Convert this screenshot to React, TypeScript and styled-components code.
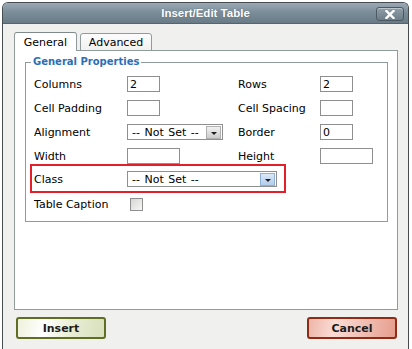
import React from 'react';
import styled, { createGlobalStyle, css } from 'styled-components';

const GlobalStyle = createGlobalStyle`
  html, body {
    margin: 0;
    padding: 0;
    background: #ffffff;
  }
  body {
    font-family: 'DejaVu Sans', Verdana, sans-serif;
    font-size: 11px;
    color: #000;
  }
`;

// Fenêtre du dialogue
const Dialog = styled.div`
  margin: 2px 0 0 2px;
  width: 407px;
  height: 347px;
  box-sizing: border-box;
  border: 1px solid #474c50;
  border-bottom: 0;
  border-radius: 6px 6px 0 0;
  background: #f0f0ee;
  overflow: hidden;
`;

const TitleBar = styled.div`
  display: grid;
  grid-template-columns: 1fr auto 1fr;
  align-items: center;
  height: 20px;
  background: linear-gradient(#9aa9b4, #7d8e9b 45%, #6a7b88);
  border-bottom: 1px solid #56646f;
`;

const Title = styled.span`
  grid-column: 2;
  color: #ffffff;
  font-family: 'Liberation Sans', Arial, sans-serif;
  font-weight: bold;
  font-size: 11.5px;
  text-shadow: 0 0 1px rgba(40, 50, 60, 0.5);
`;

const CloseButton = styled.button`
  grid-column: 3;
  justify-self: end;
  display: flex;
  align-items: center;
  justify-content: center;
  width: 28px;
  height: 14px;
  margin: 2px 4px 0 0;
  padding: 0;
  border: 1px solid #4c5963;
  border-radius: 3px;
  background: linear-gradient(#8f9ea9, #6d7d88);
  box-shadow: inset 0 1px 0 rgba(255, 255, 255, 0.4);
`;

const Body = styled.div`
  padding: 8px 10px 0 11px;
`;

const Tabs = styled.div`
  display: flex;
  align-items: flex-end;
  gap: 3px;
  height: 19px;
  margin-bottom: -1px;
  position: relative;
  z-index: 1;
`;

const Tab = styled.div<{ $active?: boolean }>`
  box-sizing: border-box;
  display: flex;
  align-items: center;
  justify-content: center;
  border: 1px solid #919b9c;
  border-radius: 3px 3px 0 0;
  ${(p) =>
    p.$active
      ? css`
          width: 63px;
          height: 19px;
          background: #ffffff;
          border-bottom: 0;
          border-top-color: #7f8a8b;
        `
      : css`
          width: 72px;
          height: 18px;
          background: linear-gradient(#fcfcfe, #f1f1ef);
          padding-top: 1px;
        `}
`;

const Panel = styled.div`
  box-sizing: border-box;
  height: 260px;
  background: #ffffff;
  border: 1px solid #919b9c;
`;

const Fieldset = styled.fieldset`
  margin: 5px 9px 0 10px;
  padding: 4px 8px 5px 8px;
  border: 1px solid #919b9c;
`;

const Legend = styled.legend`
  margin-left: -3px;
  padding: 0 2px;
  line-height: 12px;
  font-size: 10px;
  font-weight: bold;
  color: #2b6fb6;
`;

const Row = styled.div`
  display: flex;
  align-items: center;
  height: 24px;
`;

const Highlight = styled.div`
  display: flex;
  align-items: center;
  box-sizing: border-box;
  width: 256px;
  height: 29px;
  margin: -4px 0 -1px -4px;
  padding: 1px 0 0 2px;
  border: 2px solid #e3202a;
`;

const Label = styled.span<{ $second?: boolean }>`
  width: ${(p) => (p.$second ? 82 : 93)}px;
  white-space: nowrap;
`;

const Cell = styled.div`
  display: flex;
  align-items: center;
  width: 111px;
`;

const TextInput = styled.input<{ $wide?: boolean }>`
  box-sizing: border-box;
  width: ${(p) => (p.$wide ? 53 : 33)}px;
  height: 16px;
  margin: 0;
  padding: 0 2px;
  border: 1px solid #8f8f8f;
  background: #ffffff;
  font-family: 'DejaVu Sans', Verdana, sans-serif;
  font-size: 11px;
  color: #000;
  outline: none;
`;

const Select = styled.div<{ $width: number }>`
  box-sizing: border-box;
  display: flex;
  align-items: center;
  justify-content: space-between;
  width: ${(p) => p.$width}px;
  height: 16px;
  border: 1px solid #8f8f8f;
  background: #ffffff;
  padding-left: 4px;
  white-space: nowrap;
  word-spacing: 1px;
`;

const SelectArrow = styled.span<{ $focused?: boolean }>`
  box-sizing: border-box;
  display: flex;
  align-items: flex-end;
  justify-content: center;
  width: 15px;
  height: 13px;
  margin-right: 1px;
  padding-bottom: 3px;
  border: 1px solid ${(p) => (p.$focused ? '#8fb0d6' : '#b0b0b0')};
  background: ${(p) =>
    p.$focused
      ? 'linear-gradient(#dbe8f7, #b4cdec)'
      : 'linear-gradient(#f2f2f2, #cbcbcb)'};

  &::after {
    content: '';
    border-left: 3px solid transparent;
    border-right: 3px solid transparent;
    border-top: 3px solid #1e1e1e;
  }
`;

const Checkbox = styled.span`
  box-sizing: border-box;
  width: 13px;
  height: 13px;
  margin-left: 3px;
  border: 1px solid #8e8f8f;
  background: linear-gradient(135deg, #d6d6d3, #f7f7f5);
`;

const Footer = styled.div`
  display: flex;
  justify-content: space-between;
  margin-top: 7px;
  padding: 0 1px 0 2px;
`;

const Button = styled.button<{ $tone: 'ok' | 'cancel' }>`
  box-sizing: border-box;
  width: 90px;
  height: 22px;
  margin: 0;
  padding: 0;
  border-radius: 3px;
  font-family: 'DejaVu Sans', Verdana, sans-serif;
  font-size: 11px;
  font-weight: bold;
  color: #1c1c1c;
  ${(p) =>
    p.$tone === 'ok'
      ? css`
          border: 2px solid #5f6e22;
          background: linear-gradient(100deg, #eef2dc 0%, #ffffff 30%, #e9eed6 60%, #d8e0bc 100%);
        `
      : css`
          border: 2px solid #8f2c15;
          background: linear-gradient(100deg, #eeb6a9 0%, #fadcd5 30%, #f2c2b7 60%, #e69e8e 100%);
        `}
`;

const CloseIcon = () => (
  <svg width="10" height="9" viewBox="0 0 10 9">
    <path d="M1.5 1 L8.5 8 M8.5 1 L1.5 8" stroke="#ffffff" strokeWidth="2.4" strokeLinecap="square" />
  </svg>
);

const App: React.FC = () => {
  return (
    <>
      <GlobalStyle />
      <Dialog>
        <TitleBar>
          <Title>Insert/Edit Table</Title>
          <CloseButton aria-label="Close">
            <CloseIcon />
          </CloseButton>
        </TitleBar>
        <Body>
          <Tabs>
            <Tab $active>General</Tab>
            <Tab>Advanced</Tab>
          </Tabs>
          <Panel>
            <Fieldset>
              <Legend>General Properties</Legend>
              <Row>
                <Label>Columns</Label>
                <Cell><TextInput defaultValue="2" /></Cell>
                <Label $second>Rows</Label>
                <TextInput defaultValue="2" />
              </Row>
              <Row>
                <Label>Cell Padding</Label>
                <Cell><TextInput /></Cell>
                <Label $second>Cell Spacing</Label>
                <TextInput />
              </Row>
              <Row>
                <Label>Alignment</Label>
                <Cell>
                  <Select $width={96}>
                    -- Not Set --
                    <SelectArrow />
                  </Select>
                </Cell>
                <Label $second>Border</Label>
                <TextInput defaultValue="0" />
              </Row>
              <Row>
                <Label>Width</Label>
                <Cell><TextInput $wide /></Cell>
                <Label $second>Height</Label>
                <TextInput $wide />
              </Row>
              <Highlight>
                <Label>Class</Label>
                <Select $width={150}>
                  -- Not Set --
                  <SelectArrow $focused />
                </Select>
              </Highlight>
              <Row>
                <Label>Table Caption</Label>
                <Checkbox />
              </Row>
            </Fieldset>
          </Panel>
          <Footer>
            <Button $tone="ok">Insert</Button>
            <Button $tone="cancel">Cancel</Button>
          </Footer>
        </Body>
      </Dialog>
    </>
  );
};

export default App;
